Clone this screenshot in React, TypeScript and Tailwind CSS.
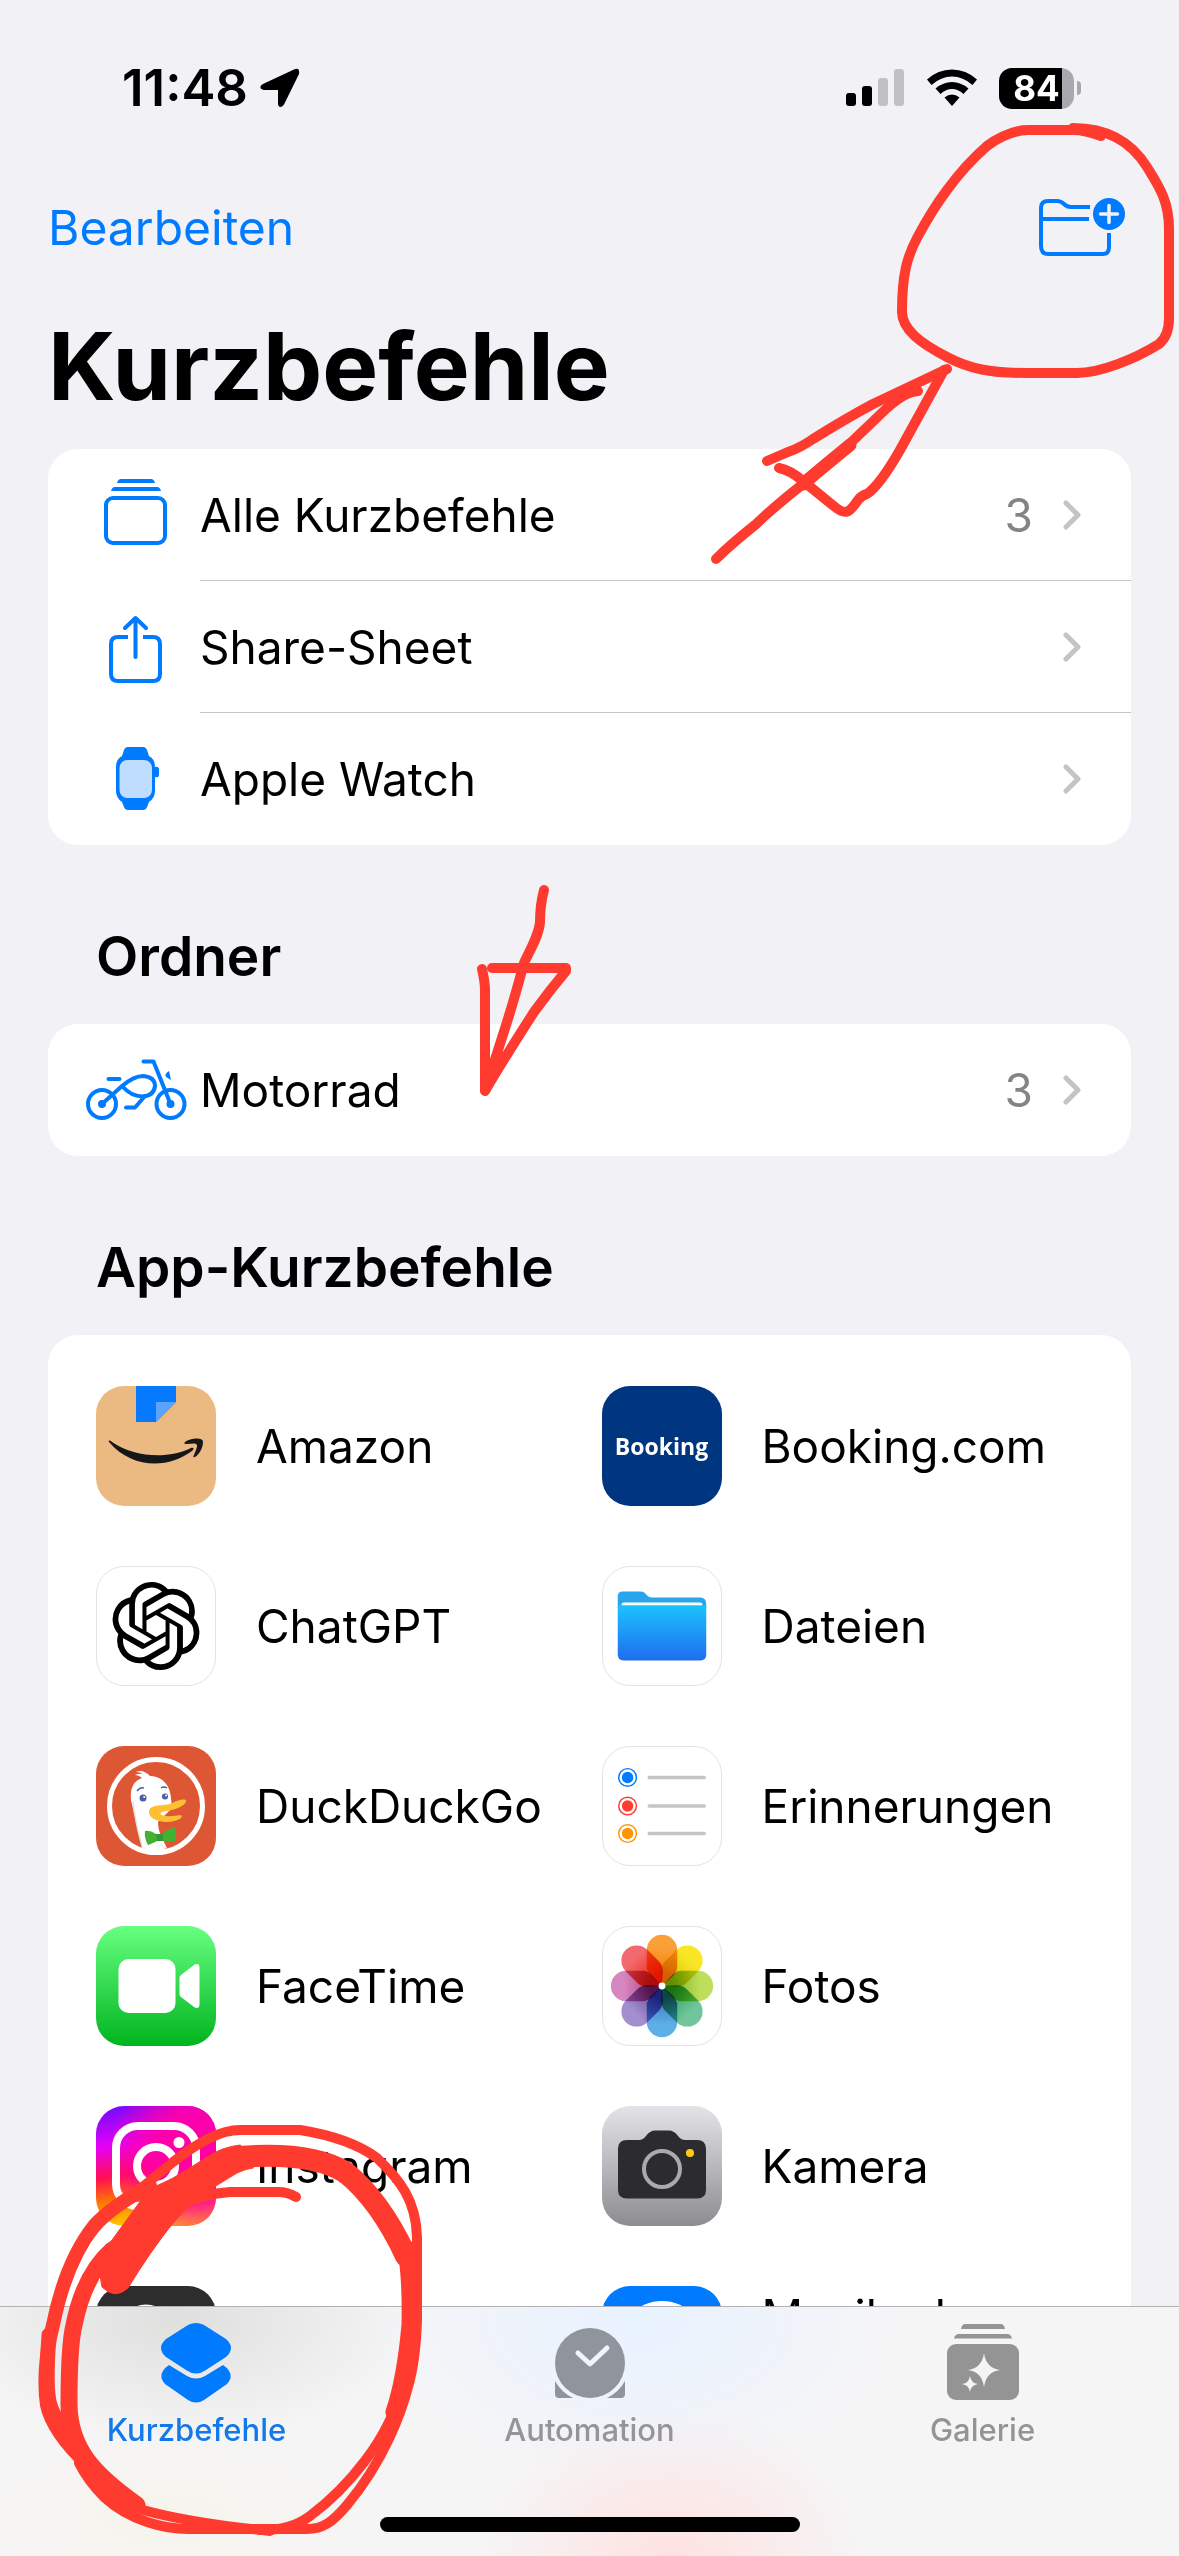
import type { ReactNode } from 'react'
import { SiOpenai } from 'react-icons/si'

function Chevron() {
  return (
    <svg width="20" height="32" viewBox="0 0 20 32" fill="none" stroke="#c4c4c7" strokeWidth="5" strokeLinecap="round" strokeLinejoin="round">
      <path d="M3 4 15 16 3 28" />
    </svg>
  )
}

function StackIcon() {
  return (
    <svg width="104" height="84" viewBox="0 0 104 84" fill="none">
      <path d="M33 10Q34 6 37 6H67Q70 6 71 10ZM27 18Q28 14 31 14H73Q76 14 77 18Z" fill="#007aff" />
      <rect x="22" y="25" width="59" height="45" rx="7" stroke="#007aff" strokeWidth="4" />
    </svg>
  )
}

function ShareIcon() {
  return (
    <svg width="104" height="84" viewBox="0 0 104 84" fill="none" stroke="#007aff" strokeWidth="4">
      <path d="M44 32H34Q27 32 27 39V69Q27 76 34 76H69Q76 76 76 69V39Q76 32 69 32H59" />
      <path d="M51.500 13V52M41 23 51.500 13 62 23" strokeLinecap="round" strokeLinejoin="round" />
    </svg>
  )
}

function WatchIcon() {
  return (
    <svg width="104" height="84" viewBox="0 0 104 84">
      <path
        d="M44 10H59Q62 10 63 13L65 19Q71 22 71 30Q75 29 75 33V38Q75 41 71 40V54Q71 61 65 65L63 70Q62 73 59 73H44Q41 73 40 70L38 65Q32 61 32 54V30Q32 22 38 19L40 13Q41 10 44 10Z"
        fill="#007aff"
      />
      <rect x="35.500" y="23" width="32.500" height="38" rx="8" fill="#bfdeff" />
    </svg>
  )
}

function MotorcycleIcon() {
  return (
    <svg width="104" height="84" viewBox="0 0 104 84" fill="none" stroke="#007aff" strokeWidth="4" strokeLinecap="round" strokeLinejoin="round">
      <circle cx="18" cy="56" r="14" />
      <circle cx="86.500" cy="56" r="14" />
      <circle cx="18" cy="56" r="2" />
      <circle cx="86.500" cy="56" r="2" />
      <path d="M24.500 31H35.500M59.500 13.500H69.500L86.500 56" />
      <path d="M18 56 38 38Q50 28 59 28Q71 29 71 38Q70 48 58 48.500Q47 48 39 39" />
      <path d="M42 59.500H51L61 48" />
      <path d="M85 23Q80 26 82 29L87 32Z" fill="#007aff" stroke="none" />
    </svg>
  )
}

function AmazonIcon() {
  return (
    <svg width="120" height="120" viewBox="0 0 120 120">
      <rect width="120" height="120" fill="#ebba83" />
      <path d="M40 0H80V16L60 36H40Z" fill="#057aff" />
      <path d="M60 16H80L60 36Z" fill="#5ba3fb" />
      <path d="M13 56C12 54 14 54 16 56C40 72 72 73 95 62C98 61 98.500 63 96 65C72 83 36 83 13 56Z" fill="#161718" />
      <path d="M89 56C94 52 107 51 107 56C107 61 104 68 99 71C97 72 97 70 98 69C101 62 102 59 100 58C98 57 94 58 91 58C88 58 88 57 89 56Z" fill="#161718" />
    </svg>
  )
}

function DuckIcon() {
  return (
    <svg width="120" height="120" viewBox="0 0 120 120">
      <rect width="120" height="120" fill="#dd5735" />
      <path
        d="M46 102C42 84 38 68 35 54C34 43 37 35 46 32Q43 29 39 29Q43 27 47 28Q44 26 40 26Q47 23 54 30C64 30 74 37 75 52L76 62L62 76Q62 84 66 92L71 102Q58 108 46 102Z"
        fill="#fff"
      />
      <path d="M37 56Q40 80 46 100" stroke="#dedede" strokeWidth="1.500" fill="none" />
      <circle cx="60" cy="60" r="46.500" fill="none" stroke="#fff" strokeWidth="5" />
      <path d="M53 66C53 58 66 60 74 58C82 54 90 52 90 55C90 60 78 64 71 65C63 66 62 69 70 70C76 71 85 68 86 70C85 74 76 76 69 76C60 75 53 72 53 66Z" fill="#fec031" />
      <path d="M49 85Q54 84 60 88H66Q70 84 79 81Q81 88 79 95Q72 97 67 95H61Q55 98 52 99Q48 92 49 85Z" fill="#43b131" />
      <path d="M60 88H67V95H61Z" fill="#35993a" />
      <circle cx="47" cy="52" r="3.500" fill="#4a5ea3" />
      <circle cx="69" cy="50.500" r="3" fill="#4a5ea3" />
      <circle cx="48.200" cy="51" r="1" fill="#fff" />
      <circle cx="70" cy="49.500" r="1" fill="#fff" />
      <path d="M41 45Q44 41 48 42M65 42Q68 40 71 42" stroke="#4a5ea3" strokeWidth="1.500" fill="none" />
    </svg>
  )
}

function FilesIcon() {
  return (
    <svg width="120" height="120" viewBox="0 0 120 120">
      <defs>
        <linearGradient id="files" x1="0" y1="0" x2="0" y2="1">
          <stop offset="0" stopColor="#1cc2fc" />
          <stop offset="1" stopColor="#1f6df0" />
        </linearGradient>
      </defs>
      <path d="M15 42V30Q15 25 20 25H38Q42 25 44 28Q46 31 50 31H99Q105 31 105 38V42Z" fill="#27a6ee" />
      <rect x="19" y="36" width="82" height="6" rx="2" fill="#fff" />
      <path d="M15 40Q16 39 18 39H102Q105 39 105 41V89Q105 95 99 95H21Q15 95 15 89Z" fill="url(#files)" />
    </svg>
  )
}

const reminderDots = [
  { y: 31, color: '#007aff' },
  { y: 60, color: '#ff3b30' },
  { y: 88, color: '#ff9500' },
]

function RemindersIcon() {
  return (
    <svg width="120" height="120" viewBox="0 0 120 120">
      {reminderDots.map((d) => (
        <g key={d.y}>
          <circle cx="25" cy={d.y} r="9" fill="none" stroke={d.color} strokeWidth="1.500" />
          <circle cx="25" cy={d.y} r="5.800" fill={d.color} />
          <path d={`M47 ${d.y}H103`} stroke="#c5c5c7" strokeWidth="3.500" strokeLinecap="round" />
        </g>
      ))}
    </svg>
  )
}

function FaceTimeIcon() {
  return (
    <svg width="120" height="120" viewBox="0 0 120 120">
      <defs>
        <linearGradient id="facetime" x1="0" y1="0" x2="0" y2="1">
          <stop offset="0" stopColor="#67ff81" />
          <stop offset="1" stopColor="#01b41f" />
        </linearGradient>
      </defs>
      <rect width="120" height="120" fill="url(#facetime)" />
      <rect x="22.500" y="33" width="57" height="54" rx="10" fill="#fff" />
      <path d="M83.500 52Q83.500 50 85 49L98 39Q103.500 36 103.500 42V78Q103.500 84 98 81L85 71Q83.500 70 83.500 68Z" fill="#fff" />
    </svg>
  )
}

// outer and inner colour of each petal, clockwise from the top
const petals = [
  ['#fb9f38', '#f57c00'],
  ['#f9e726', '#dcc400'],
  ['#bfdf5c', '#76b82a'],
  ['#70c69a', '#2f9e5c'],
  ['#5cb0e6', '#3f6fbe'],
  ['#a38fd0', '#6f4aa0'],
  ['#d588c0', '#b8437c'],
  ['#f26a70', '#ee2a10'],
]

function PhotosIcon() {
  return (
    <svg width="120" height="120" viewBox="0 0 120 120">
      {petals.map(([outer, inner], i) => (
        <g key={outer} transform={`rotate(${i * 45} 60 60)`} className="mix-blend-multiply">
          <linearGradient id={`petal${i}`} x1="0" y1="0" x2="0" y2="1">
            <stop offset="0.250" stopColor={outer} />
            <stop offset="0.800" stopColor={inner} />
          </linearGradient>
          <path d="M44.500 23.500A15.500 15.500 0 0 1 75.500 23.500V41Q75.500 45 71 50L60 60 49 50Q44.500 45 44.500 41Z" fill={`url(#petal${i})`} />
        </g>
      ))}
      <circle cx="60" cy="60" r="3.500" fill="#fff" />
    </svg>
  )
}

function InstagramIcon() {
  return (
    <svg width="120" height="120" viewBox="0 0 120 120">
      <defs>
        <linearGradient id="insta" x1="0" y1="0" x2="0.150" y2="1">
          <stop offset="0" stopColor="#6a0cff" />
          <stop offset="0.350" stopColor="#e800f5" />
          <stop offset="0.600" stopColor="#ff1050" />
          <stop offset="0.800" stopColor="#ff7a00" />
          <stop offset="1" stopColor="#ffc400" />
        </linearGradient>
        <radialGradient id="instaPink" cx="0.850" cy="0.400" r="0.750">
          <stop offset="0" stopColor="#ff00a0" />
          <stop offset="0.500" stopColor="#ff00a8" stopOpacity="0.900" />
          <stop offset="1" stopColor="#ff00a8" stopOpacity="0" />
        </radialGradient>
      </defs>
      <rect width="120" height="120" fill="url(#insta)" />
      <rect width="120" height="120" fill="url(#instaPink)" />
      <g fill="none" stroke="#fff" strokeWidth="8">
        <rect x="20" y="20" width="80" height="80" rx="22" />
        <circle cx="60" cy="60" r="19" />
      </g>
      <circle cx="83" cy="36.500" r="5.500" fill="#fff" />
    </svg>
  )
}

function CameraIcon() {
  return (
    <svg width="120" height="120" viewBox="0 0 120 120">
      <defs>
        <linearGradient id="camera" x1="0" y1="0" x2="0" y2="1">
          <stop offset="0" stopColor="#e3e3e8" />
          <stop offset="1" stopColor="#8d8c91" />
        </linearGradient>
      </defs>
      <rect width="120" height="120" fill="url(#camera)" />
      <path
        d="M25 34H37Q41 34 44 30Q48 24.500 53 24.500H67Q72 24.500 76 30Q79 34 83 34H95Q104 34 104 43V84Q104 92.500 95 92.500H25Q16 92.500 16 84V43Q16 34 25 34Z"
        fill="#2c2c2e"
      />
      <circle cx="60" cy="63" r="18" fill="none" stroke="#aaa9af" strokeWidth="4" />
      <circle cx="88" cy="47" r="4" fill="#ffcc13" />
    </svg>
  )
}

function DarkIcon() {
  return (
    <svg width="120" height="120" viewBox="0 0 120 120">
      <rect width="120" height="120" fill="#2d2d2d" />
      <circle cx="50" cy="45" r="25" fill="none" stroke="#fff" strokeWidth="3" />
    </svg>
  )
}

function ShazamIcon() {
  return (
    <svg width="120" height="120" viewBox="0 0 120 120">
      <rect width="120" height="120" fill="#007aff" />
      <circle cx="60" cy="60" r="45" fill="#fff" />
    </svg>
  )
}

const plain = 'border border-[#e2e2e4] bg-white'

const apps: { id: string; label?: string; icon: ReactNode; tile?: string; labelClass?: string }[] = [
  { id: 'amazon', label: 'Amazon', icon: <AmazonIcon /> },
  { id: 'booking', label: 'Booking.com', icon: <span className="font-['Open_Sans'] text-[23px] font-bold text-white">Booking</span>, tile: 'bg-[#00357f]' },
  { id: 'chatgpt', label: 'ChatGPT', icon: <SiOpenai size={88} color="#000" />, tile: plain },
  { id: 'files', label: 'Dateien', icon: <FilesIcon />, tile: plain },
  { id: 'duckduckgo', label: 'DuckDuckGo', icon: <DuckIcon /> },
  { id: 'reminders', label: 'Erinnerungen', icon: <RemindersIcon />, tile: plain },
  { id: 'facetime', label: 'FaceTime', icon: <FaceTimeIcon /> },
  { id: 'photos', label: 'Fotos', icon: <PhotosIcon />, tile: plain },
  { id: 'instagram', label: 'Instagram', icon: <InstagramIcon /> },
  { id: 'camera', label: 'Kamera', icon: <CameraIcon /> },
  { id: 'dark', icon: <DarkIcon /> },
  { id: 'shazam', label: 'Musikerken-', icon: <ShazamIcon />, labelClass: 'h-[120px]' },
]

const library = [
  { label: 'Alle Kurzbefehle', icon: <StackIcon />, count: 3 },
  { label: 'Share-Sheet', icon: <ShareIcon /> },
  { label: 'Apple Watch', icon: <WatchIcon /> },
]

const folders = [{ label: 'Motorrad', icon: <MotorcycleIcon />, count: 3 }]

function ListCard({ items }: { items: { label: string; icon: ReactNode; count?: number }[] }) {
  return (
    <ul className="overflow-hidden rounded-[30px] bg-white">
      {items.map((item, i) => (
        <li key={item.label}>
          <a href="#" className="flex h-[132px] items-center gap-3 pl-9">
            <span className="w-[104px] shrink-0">{item.icon}</span>
            <span className={`flex h-full flex-1 items-center pr-12 ${i < items.length - 1 ? 'border-b border-[#c6c6c8]' : ''}`}>
              <span className="flex-1">{item.label}</span>
              <span className="mr-[30px] text-[#848488]">{item.count}</span>
              <Chevron />
            </span>
          </a>
        </li>
      ))}
    </ul>
  )
}

function SectionTitle({ children }: { children: ReactNode }) {
  return <h2 className="px-12 pt-[75px] pb-8 text-[55px] leading-[72px] font-semibold">{children}</h2>
}

function StatusBar() {
  return (
    <div className="flex h-[162px] items-center justify-between pt-[14px] pr-[98px] pl-[122px]">
      <div className="flex items-center gap-3">
        <span className="text-[51px] leading-[60px] font-semibold">11:48</span>
        <svg width="40" height="40" viewBox="0 0 40 40">
          <path d="M34 1.500Q40-1 39 6L24 36.500Q22 40 19 38.500Q18 38 18 35V22H4Q-1 21 1 17.500Q2 16.500 4 15.500Z" />
        </svg>
      </div>
      <div className="flex items-center gap-[22px]">
        <svg width="60" height="40" viewBox="0 0 60 40">
          <rect x="1" y="25" width="10" height="13" rx="3" />
          <rect x="17" y="18" width="10" height="20" rx="3" />
          <rect x="33" y="10" width="10" height="28" rx="3" fill="#c1c1c5" />
          <rect x="49" y="1" width="10" height="37" rx="3" fill="#c1c1c5" />
        </svg>
        <svg width="50" height="40" viewBox="0 0 50 40">
          <path d="M0 11.500Q11 1.500 25 1.500T50 11.500L45.500 17Q36 8.500 25 8.500T4.500 17ZM8.500 20.500Q16 14 25 14T41.500 20.500L36.500 26Q31 21 25 21T13.500 26ZM17.500 29.500Q21 26.500 25 26.500T32.500 29.500L25 38Z" />
        </svg>
        <div className="flex items-center gap-[3px]">
          <div className="flex h-[41px] w-[75px] items-center justify-center rounded-[13px] bg-linear-to-r from-black from-84% to-[#a9a9ad] to-84% text-[35px] leading-none font-bold text-white">
            84
          </div>
          <div className="h-[14px] w-1 rounded-r-full bg-[#a9a9ad]" />
        </div>
      </div>
    </div>
  )
}

function NewFolderIcon() {
  return (
    <svg width="90" height="64" viewBox="0 0 90 64" fill="none" stroke="#007aff" strokeWidth="4">
      <path d="M53 11H34Q30 11 27 8Q24 5 20 5H11Q4 5 4 12V50Q4 58 11 58H66Q72 58 72 51V37M4 23H52" />
      <circle cx="72" cy="18" r="16" fill="#007aff" stroke="none" />
      <path d="M72 9.500V26.500M63.500 18H80.500" stroke="#f2f1f6" strokeWidth="3.500" strokeLinecap="round" />
    </svg>
  )
}

function ShortcutsTabIcon() {
  return (
    <svg width="72" height="84" viewBox="1 0 72 84" fill="#007aff">
      <path d="M28 5Q36 1 44 5L66 19Q76 28 66 37L46 50Q36 57 26 50L6 37Q-4 28 6 19Z" />
      <path d="M9 45 27 56Q36 61 45 56L63 45Q76 54 67 64L44 80Q36 85 28 80L5 64Q-4 54 9 45Z" />
    </svg>
  )
}

function AutomationTabIcon() {
  return (
    <svg width="72" height="84" viewBox="0 0 72 84" fill="#8f949d">
      <circle cx="36" cy="43" r="35" />
      <path d="M1 61Q7 72 19 78H5Q1 78 1 74ZM71 61Q65 72 53 78H67Q71 78 71 74Z" />
      <path d="M24 33 36 44 53 28" fill="none" stroke="#f0f4fb" strokeWidth="5" strokeLinecap="round" strokeLinejoin="round" />
    </svg>
  )
}

function GalleryTabIcon() {
  return (
    <svg width="72" height="84" viewBox="0 0 72 84" fill="#949494">
      <path d="M14 9Q15 4 18 4H54Q57 4 58 9ZM7 18.500Q8 14 12 14H60Q64 14 65 18.500Z" />
      <rect y="24" width="72" height="56" rx="9" />
      <path d="M37 33Q39 48 53 50Q39 52 37 67Q35 52 21 50Q35 48 37 33ZM23 56Q24 63 31 64Q24 65 23 72Q22 65 15 64Q22 63 23 56Z" fill="#f4f4f4" />
    </svg>
  )
}

const tabs = [
  { label: 'Kurzbefehle', icon: <ShortcutsTabIcon />, color: 'text-[#1479e8]' },
  { label: 'Automation', icon: <AutomationTabIcon />, color: 'text-[#949499]' },
  { label: 'Galerie', icon: <GalleryTabIcon />, color: 'text-[#949494]' },
]

function TabBar() {
  return (
    <nav className="absolute inset-x-0 bottom-0 h-[250px] border-t border-[#b2b2b4] bg-[radial-gradient(ellipse_240px_120px_at_15%_5%,#dfdfde,transparent),radial-gradient(ellipse_260px_160px_at_54%_5%,#e8f2ff,transparent),radial-gradient(ellipse_200px_150px_at_57%_100%,#ffe2e2,transparent),radial-gradient(ellipse_220px_90px_at_14%_85%,#f6f4ec,transparent)] bg-[#f5f5f6]">
      <div className="grid grid-cols-3 pt-[13px]">
        {tabs.map((tab) => (
          <a key={tab.label} href="#" className={`flex flex-col items-center text-[31px] leading-9 font-medium ${tab.color}`}>
            {tab.icon}
            <span className="mt-2">{tab.label}</span>
          </a>
        ))}
      </div>
      <div className="absolute bottom-6 left-1/2 h-[15px] w-[420px] -translate-x-1/2 rounded-full bg-black" />
    </nav>
  )
}

// red pen marks over the screen
function PenMarks() {
  return (
    <svg
      className="pointer-events-none absolute inset-0 h-full w-full"
      viewBox="0 0 1179 2556"
      fill="none"
      stroke="#ff3b30"
      strokeWidth="10"
      strokeLinecap="round"
      strokeLinejoin="round"
    >
      <path d="M1101 136Q1085 130 1073 130H1028C1010 130 992 142 987 146C972 159 958 175 947 190Q932 210 917 238C907 257 902 275 902 312C902 330 922 344 947 357C970 369 990 373 1027 373H1077C1100 373 1135 359 1159 344Q1169 336 1169 318V229C1169 200 1158 185 1147 167C1130 140 1106 128 1073 128" />
      <path d="M947 369 873 404Q845 419 813 439Q800 448 788 452L767 461" />
      <path d="M944 370 900 450Q880 485 867 494Q862 495 858 500C850 512 846 516 835 507L803 481Q790 470 779 468" />
      <path d="M716 559Q730 545 755 525Q775 506 803 484Q823 469 843 450L887 408Q905 392 918 391" />
      <path d="M803 484Q823 467 850 445" strokeWidth="13" />
      <path d="M544 890Q540 905 540 922C539 935 531 948 524 963Q514 1000 507 1022L485 1091M482 969Q485 982 485 990V1091Q500 1065 534 1012Q550 990 566 971L566 968H492" />

      <path d="M296 2197Q288 2192 278 2192H230Q204 2194 178 2205" />
      <path d="M92 2232Q106 2214 123 2203L173 2162Q195 2145 210 2138Q226 2130 240 2130H300Q350 2138 377 2158C400 2180 416 2200 417 2237V2320C416 2350 413 2370 408 2387C402 2410 385 2460 347 2505C332 2523 322 2529 307 2529H188C165 2529 130 2521 104 2497C95 2488 85 2475 79 2463" />
      <path d="M150 2186Q112 2206 94 2226C72 2254 60 2290 53 2325C45 2355 44 2385 47 2405C52 2428 72 2450 88 2465" strokeWidth="14" />
      <path d="M49 2335Q45 2390 50 2405Q54 2420 76 2445" strokeWidth="15" />
      <path d="M112 2250Q84 2275 74 2325Q69 2345 69 2405C70 2450 95 2475 137 2505" strokeWidth="17" />
      <path d="M90 2465Q108 2498 143 2510Q190 2523 270 2531" />
      <path
        d="M240 2145Q222 2147 207 2157Q195 2165 173 2178Q155 2187 150 2188L112 2240Q95 2255 102 2287Q115 2300 128 2288Q150 2252 173 2223Q195 2197 237 2173Q245 2169 253 2168Z"
        fill="#ff3b30"
        strokeWidth="1"
      />
      <path d="M238 2157Q310 2151 345 2172Q380 2200 406 2256" strokeWidth="22" />
      <path d="M407 2250Q412 2280 411 2325Q406 2380 395 2412" strokeWidth="19" />
      <path d="M402 2385C390 2440 345 2490 310 2516Q290 2531 260 2530" />
    </svg>
  )
}

export default function App() {
  return (
    <div className="relative h-screen overflow-hidden bg-[#f2f1f6] font-[Inter,sans-serif] text-[46px] leading-[60px] text-black">
      <StatusBar />
      <header className="flex h-[132px] items-center justify-between pr-[52px] pl-12">
        <button type="button" className="text-[48px] text-[#007aff]">Bearbeiten</button>
        <button type="button" aria-label="Neuer Ordner">
          <NewFolderIcon />
        </button>
      </header>
      <main className="px-12 pt-3">
        <h1 className="mb-[23px] text-[94px] leading-[120px] font-bold">Kurzbefehle</h1>
        <ListCard items={library} />
        <SectionTitle>Ordner</SectionTitle>
        <ListCard items={folders} />
        <SectionTitle>App-Kurzbefehle</SectionTitle>
        <div className="grid grid-cols-2 gap-y-[60px] rounded-[30px] bg-white py-[51px] pr-6 pl-12">
          {apps.map((app) => (
            <a key={app.id} href="#" className="flex items-center gap-10">
              <span className={`flex size-[120px] shrink-0 items-center justify-center overflow-hidden rounded-[28px] ${app.tile ?? ''}`}>
                {app.icon}
              </span>
              <span className={app.labelClass}>{app.label}</span>
            </a>
          ))}
        </div>
      </main>
      <TabBar />
      <PenMarks />
    </div>
  )
}
